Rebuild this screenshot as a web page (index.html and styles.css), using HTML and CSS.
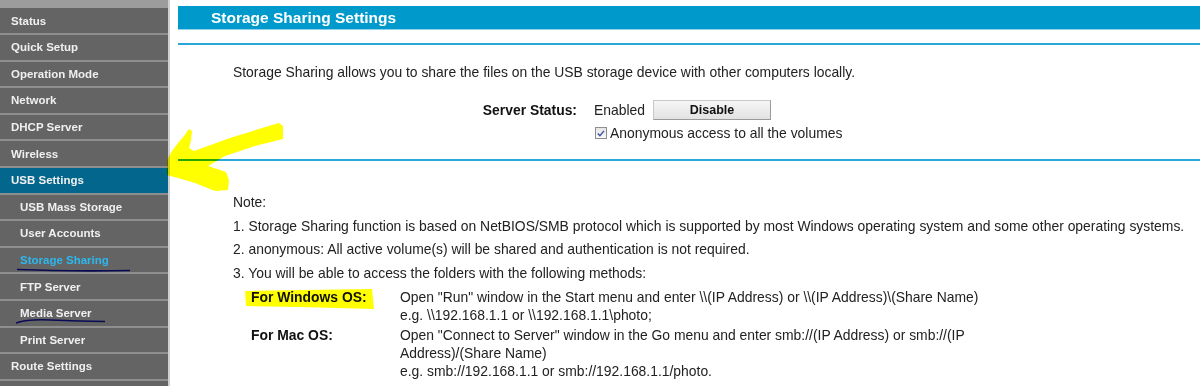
FILE: index.html
```html
<!DOCTYPE html>
<html>
<head>
<meta charset="utf-8">
<link rel="stylesheet" href="styles.css">
</head>
<body>
<div class="page">
  <nav class="sidebar">
    <div class="strip"></div>
    <div class="nav-item">Status</div>
    <div class="nav-item">Quick Setup</div>
    <div class="nav-item">Operation Mode</div>
    <div class="nav-item">Network</div>
    <div class="nav-item">DHCP Server</div>
    <div class="nav-item">Wireless</div>
    <div class="nav-item active">USB Settings</div>
    <div class="nav-item sub">USB Mass Storage</div>
    <div class="nav-item sub">User Accounts</div>
    <div class="nav-item sub current">Storage Sharing</div>
    <div class="nav-item sub">FTP Server</div>
    <div class="nav-item sub">Media Server</div>
    <div class="nav-item sub">Print Server</div>
    <div class="nav-item">Route Settings</div>
    <div class="nav-item"></div>
  </nav>
  <main class="main">
    <div class="title-bar">Storage Sharing Settings</div>
    <div class="rule rule-top"></div>
    <p class="intro">Storage Sharing allows you to share the files on the USB storage device with other computers locally.</p>
    <div class="status-grid">
      <div class="label">Server Status:</div>
      <div class="value"><span>Enabled</span><button class="btn">Disable</button></div>
      <div></div>
      <div class="value check-row">
        <span class="checkbox"><svg width="11" height="11" viewBox="0 0 11 11"><path d="M2 5.6 L4.3 8 L8.8 2.6" fill="none" stroke="#3b55a0" stroke-width="1.6"/></svg></span>
        <span>Anonymous access to all the volumes</span>
      </div>
    </div>
    <div class="rule rule-mid"></div>
    <div class="notes">
      <div class="note-line">Note:</div>
      <div class="note-line">1. Storage Sharing function is based on NetBIOS/SMB protocol which is supported by most Windows operating system and some other operating systems.</div>
      <div class="note-line">2. anonymous: All active volume(s) will be shared and authentication is not required.</div>
      <div class="note-line">3. You will be able to access the folders with the following methods:</div>
      <div class="os-table">
        <div class="os-label">For Windows OS:</div>
        <div class="os-desc">Open "Run" window in the Start menu and enter \\(IP Address) or \\(IP Address)\(Share Name)<br>e.g. \\192.168.1.1 or \\192.168.1.1\photo;</div>
        <div class="os-label">For Mac OS:</div>
        <div class="os-desc">Open "Connect to Server" window in the Go menu and enter smb://(IP Address) or smb://(IP<br>Address)/(Share Name)<br>e.g. smb://192.168.1.1 or smb://192.168.1.1/photo.</div>
      </div>
    </div>
  </main>
  <svg class="marks" width="1200" height="386" viewBox="0 0 1200 386">
    <polygon fill="#ffff00" points="167,160 172,151 178,143 184,136 189,129 192,131 191,140 189,148 194,151 230,138 262,128 279,123 283,126 283,139 255,146 225,156 208,166 226,172 229,180 228,190 215,191 195,183 178,178 167,175"/>
    <polygon fill="#ffff00" points="245,291 372,289 374,309 300,307 246,306"/>
    <path d="M17,269.5 Q70,271.5 130,270.5" fill="none" stroke="#1717d6" stroke-width="1.6"/>
    <path d="M16,323 Q28,319 50,320 Q80,321 105,321.5" fill="none" stroke="#1717d6" stroke-width="1.6"/>
  </svg>
</div>
</body>
</html>
```
FILE: styles.css
```css
html, body {
  margin: 0;
  padding: 0;
  background: #ffffff;
}

body {
  font-family: "Liberation Sans", Arial, sans-serif;
  color: #222222;
}

.page {
  position: relative;
  display: flex;
  width: 1200px;
  height: 386px;
  overflow: hidden;
}

.sidebar {
  flex: none;
  width: 168px;
  background: #646464;
  border-right: 2px solid #d0d0d0;
}

.strip {
  height: 8.4px;
  background: #9c9c9c;
}

.nav-item {
  box-sizing: border-box;
  height: 26.6px;
  border-bottom: 2px solid #8e8e8e;
  display: flex;
  align-items: center;
  padding-left: 11px;
  font-size: 11.5px;
  font-weight: bold;
  color: #f0f0f0;
  white-space: nowrap;
}

.nav-item.sub {
  padding-left: 20px;
}

.nav-item.active {
  background: #03668d;
}

.nav-item.current {
  color: #2cb8ee;
}

.main {
  flex: 1;
  min-width: 0;
  padding-left: 8px;
}

.title-bar {
  margin-top: 6px;
  height: 23px;
  line-height: 23px;
  background: #0099cc;
  border-bottom: 1px solid #8fd0ea;
  padding-left: 33px;
  color: #ffffff;
  font-size: 15.5px;
  font-weight: bold;
  white-space: nowrap;
}

.rule {
  height: 2px;
  background: #29a6da;
}

.rule-top {
  margin-top: 13px;
}

.intro {
  margin: 19px 0 0 0;
  padding-left: 55px;
  font-size: 13.9px;
  line-height: 16px;
  white-space: nowrap;
}

.status-grid {
  display: grid;
  grid-template-columns: 399px 1fr;
  column-gap: 17px;
  row-gap: 5px;
  margin-top: 20px;
  font-size: 13.9px;
}

.label {
  font-weight: bold;
  color: #111111;
  display: flex;
  align-items: center;
  justify-content: flex-end;
  height: 20px;
}

.value {
  display: flex;
  align-items: center;
  height: 20px;
  white-space: nowrap;
}

.btn {
  margin-left: 8px;
  width: 118px;
  height: 20px;
  padding: 0;
  font-family: "Liberation Sans", Arial, sans-serif;
  font-size: 12.5px;
  font-weight: bold;
  color: #111111;
  background: linear-gradient(#f6f6f6, #e2e2e2);
  border: 1px solid #c8c8c8;
  border-right-color: #9a9a9a;
  border-bottom-color: #9a9a9a;
}

.check-row {
  height: 16px;
  gap: 3px;
}

.checkbox {
  box-sizing: border-box;
  width: 12px;
  height: 12px;
  border: 1px solid #8f8f8f;
  background: linear-gradient(#e6e6e6, #f8f8f8);
  display: flex;
  align-items: center;
  justify-content: center;
  margin-left: 1px;
}

.checkbox svg {
  display: block;
}

.rule-mid {
  margin-top: 18px;
}

.notes {
  margin-top: 29px;
  padding-left: 55px;
  font-size: 13.9px;
}

.note-line {
  height: 23.6px;
  line-height: 24px;
  white-space: nowrap;
}

.os-table {
  display: grid;
  grid-template-columns: 149px 1fr;
  row-gap: 2px;
  padding-left: 18px;
  margin-top: 4px;
  line-height: 18px;
}

.os-label {
  font-weight: bold;
  color: #111111;
}

.os-desc {
  white-space: nowrap;
}

.marks {
  position: absolute;
  left: 0;
  top: 0;
  pointer-events: none;
  mix-blend-mode: multiply;
}
```
